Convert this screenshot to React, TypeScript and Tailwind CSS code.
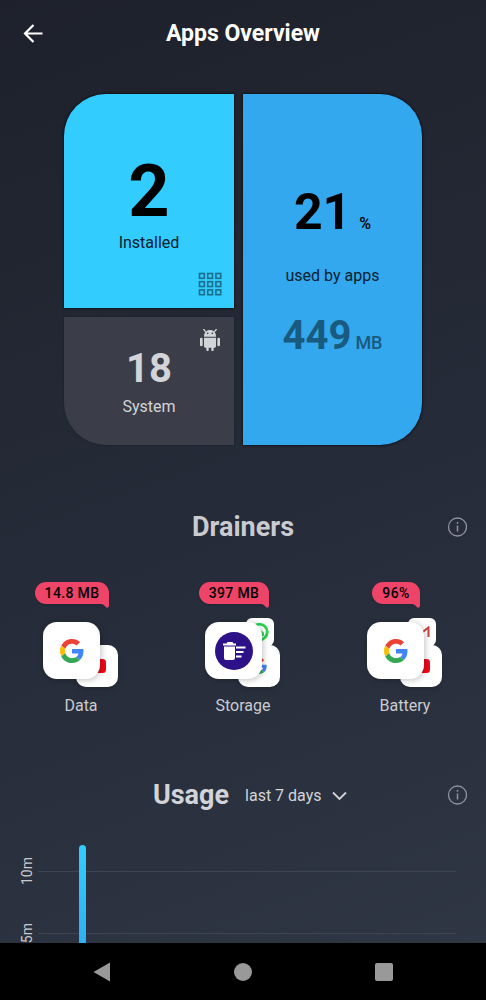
import type { ReactNode } from "react";

const GoogleLogo = ({ className }: { className: string }) => (
  <svg viewBox="0 0 48 48" className={className} aria-hidden="true">
    <path fill="#EA4335" d="M24 9.5c3.54 0 6.71 1.22 9.21 3.6l6.85-6.85C35.9 2.38 30.47 0 24 0 14.62 0 6.51 5.38 2.56 13.22l7.98 6.19C12.43 13.72 17.74 9.5 24 9.5z" />
    <path fill="#4285F4" d="M46.98 24.55c0-1.57-.15-3.09-.38-4.55H24v9.02h12.94c-.58 2.96-2.26 5.48-4.78 7.18l7.73 6c4.51-4.18 7.09-10.36 7.09-17.65z" />
    <path fill="#FBBC05" d="M10.53 28.59c-.48-1.45-.76-2.99-.76-4.59s.27-3.14.76-4.59l-7.98-6.19C.92 16.46 0 20.12 0 24c0 3.88.92 7.54 2.56 10.78l7.97-6.19z" />
    <path fill="#34A853" d="M24 48c6.48 0 11.93-2.13 15.89-5.81l-7.73-6c-2.15 1.45-4.92 2.3-8.16 2.3-6.26 0-11.57-4.22-13.47-9.91l-7.98 6.19C6.51 42.62 14.62 48 24 48z" />
  </svg>
);

const YoutubeLogo = () => (
  <svg viewBox="0 0 20 14" className="w-5" aria-hidden="true">
    <rect width="19" height="14" rx="3.5" fill="#f00617" />
    <path d="M6.5 4.2v5.6L11 7z" fill="#fff" />
  </svg>
);

const WhatsappLogo = () => (
  <svg viewBox="0 0 20 20" className="w-5" aria-hidden="true">
    <circle cx="9.5" cy="10" r="7.8" fill="none" stroke="#2bd34f" strokeWidth="2.8" />
    <path d="M1 19l1.6-5.4 3.8 3.8z" fill="#2bd34f" />
    <path d="M6 5.500h2l3.500 3.200 2.200 1.600.4 3.200-2.600 1.300C8 14.500 6 11 6 5.500z" fill="#2bd34f" />
  </svg>
);

const GmailLogo = () => (
  <svg viewBox="0 0 16 12" className="w-4" aria-hidden="true">
    <path d="M1.500 11V1.500L8 6.500l6.500-5V11" fill="none" stroke="#c9423b" strokeWidth="2" />
  </svg>
);

const CleanerLogo = () => (
  <svg viewBox="0 0 38 38" className="w-[38px]" aria-hidden="true">
    <circle cx="19" cy="19" r="19" fill="#2d1188" />
    <g fill="#fff">
      <path d="M8 11.500h3.500l1-1.500h5l1 1.500H21v2H8z" />
      <path d="M9 14.500h11V26a2 2 0 0 1-2 2h-7a2 2 0 0 1-2-2z" />
      <path d="M21 14.500h9.500v2H21zM21 19h7.500v2H21zM21 23.500h5.500v2H21z" />
    </g>
  </svg>
);

const AndroidIcon = () => (
  <svg viewBox="0 0 60 66" className="w-5" fill="#d3d4d8" aria-hidden="true">
    <path d="M11 1l5 6M49 1l-5 6" stroke="#d3d4d8" strokeWidth="4" strokeLinecap="round" />
    <path d="M12 23C12 10 19 3 30 3s18 7 18 20z" />
    <circle cx="23" cy="13" r="2.500" fill="#3b3e49" />
    <circle cx="37" cy="13" r="2.500" fill="#3b3e49" />
    <rect x="0" y="26" width="8" height="26" rx="4" />
    <rect x="52" y="26" width="8" height="26" rx="4" />
    <path d="M12 26h36v26a4 4 0 0 1-4 4h-3v7a3 3 0 0 1-7 0v-7h-8v7a3 3 0 0 1-7 0v-7h-3a4 4 0 0 1-4-4z" />
  </svg>
);

const AppsGridIcon = () => (
  <svg viewBox="0 0 24 24" className="w-6" fill="none" stroke="#1b6d8c" strokeWidth="1.600" aria-hidden="true">
    {[1.5, 9.7, 17.9].map((y) =>
      [1.5, 9.7, 17.9].map((x) => <rect key={`${x}-${y}`} x={x} y={y} width="4.800" height="4.800" />)
    )}
  </svg>
);

const InfoButton = ({ label }: { label: string }) => (
  <button type="button" aria-label={label} className="justify-self-end">
    <svg viewBox="0 0 20 20" className="w-5" fill="none" stroke="#8f949e" strokeWidth="1.300" aria-hidden="true">
      <circle cx="10.500" cy="10" r="9" />
      <path d="M10.500 8.500v6M10.500 5v1.800" strokeWidth="1.500" />
    </svg>
  </button>
);

interface Drainer {
  label: string;
  value: string;
  main: ReactNode;
  second: ReactNode;
  third?: ReactNode;
}

const drainers: Drainer[] = [
  { label: "Data", value: "14.8 MB", main: <GoogleLogo className="w-6" />, second: <YoutubeLogo /> },
  {
    label: "Storage",
    value: "397 MB",
    main: <CleanerLogo />,
    second: <GoogleLogo className="w-4" />,
    third: <WhatsappLogo />,
  },
  {
    label: "Battery",
    value: "96%",
    main: <GoogleLogo className="w-6" />,
    second: <YoutubeLogo />,
    third: <GmailLogo />,
  },
];

function DrainerCard({ drainer }: { drainer: Drainer }) {
  return (
    <li className="flex flex-col items-center">
      <div className="relative mr-[18px] h-[22px] rounded-full rounded-br-none bg-[#ee4468] px-[10px] text-sm leading-[22px] font-medium tracking-wide text-black shadow-sm">
        {drainer.value}
        <svg viewBox="0 0 8 5" className="absolute top-full right-0 -mt-px w-2" aria-hidden="true">
          <path d="M0 0h8v2.500C8 4.500 6 5.500 4.500 3.800 3.500 2.500 2 1 0 1z" fill="#ee4468" />
        </svg>
      </div>
      {/* stacked app tiles, biggest drainer in front */}
      <div className="relative mt-[14px] h-[69px] w-[76px]">
        {drainer.third && (
          <span className="absolute top-0 right-[7px] flex size-7 items-center justify-center rounded-md bg-white">
            {drainer.third}
          </span>
        )}
        <span className="absolute right-px bottom-0 flex size-[42px] items-center justify-center rounded-[10px] bg-white shadow-md">
          {drainer.second}
        </span>
        <span className="absolute top-1 left-0 flex size-[57px] items-center justify-center rounded-[14px] bg-white shadow-[1px_1px_6px_rgba(0,0,0,0.25)]">
          {drainer.main}
        </span>
      </div>
      <span className="mt-2 text-base leading-[22px] text-[#c9cbd0]">{drainer.label}</span>
    </li>
  );
}

export default function App() {
  return (
    <div className="flex h-screen flex-col overflow-hidden bg-linear-[160deg,#1e212b,#252b38_50%,#303745] font-[Roboto,sans-serif]">
      <header className="grid h-[68px] shrink-0 grid-cols-[1fr_auto_1fr] items-center px-[23px]">
        <button type="button" aria-label="Back" className="w-5">
          <svg viewBox="0 0 20 20" className="w-5" fill="none" stroke="#fff" strokeWidth="2.200" aria-hidden="true">
            <path d="M19.500 9.500H2M10.500 1L2 9.500l8.500 8.500" />
          </svg>
        </button>
        <h1 className="text-[23px] leading-9 font-bold text-white">Apps Overview</h1>
      </header>

      <main className="min-h-0 flex-1 overflow-hidden">
        <section className="mx-16 mt-[26px] grid grid-cols-[170fr_179fr] gap-[9px]">
          <div className="flex flex-col gap-[9px]">
            <div className="relative flex h-[214px] flex-col items-center rounded-tl-[42px] bg-[#33ccff] pt-[60px] text-black shadow-[0_0_3px_#000]">
              <strong className="text-[72px] leading-[76px] font-bold">2</strong>
              <span className="text-base leading-[26px] text-[#08202f]">Installed</span>
              <span className="absolute right-3 bottom-3">
                <AppsGridIcon />
              </span>
            </div>
            <div className="relative flex h-32 flex-col items-center rounded-bl-[42px] bg-[#3b3e49] pt-7 text-[#d3d4d8] shadow-[0_0_2px_#1a1d26]">
              <strong className="text-[40px] leading-[48px] font-bold">18</strong>
              <span className="text-base leading-7">System</span>
              <span className="absolute top-3 right-[14px]">
                <AndroidIcon />
              </span>
            </div>
          </div>
          <div className="flex flex-col items-center rounded-r-[42px] bg-[#33a8ee] pt-[88px] text-black shadow-[0_0_3px_#000]">
            <p className="flex items-baseline gap-2">
              <strong className="text-[50px] leading-[60px] font-bold">21</strong>
              <span className="text-base font-medium">%</span>
            </p>
            <p className="mt-[22px] text-base leading-6 text-[#08202f]">used by apps</p>
            <p className="mt-6 flex items-baseline gap-1 text-[#195a80]">
              <strong className="text-[40px] leading-[48px] font-bold">449</strong>
              <span className="text-lg font-medium">MB</span>
            </p>
          </div>
        </section>

        <section className="mt-16">
          <div className="grid grid-cols-[1fr_auto_1fr] items-center px-[19px]">
            <h2 className="col-start-2 text-[27px] leading-9 font-bold text-[#c9cbd0]">Drainers</h2>
            <InfoButton label="About drainers" />
          </div>
          <ul className="mt-[37px] grid grid-cols-3">
            {drainers.map((drainer) => (
              <DrainerCard key={drainer.label} drainer={drainer} />
            ))}
          </ul>
        </section>

        <section className="mt-[60px]">
          <div className="grid grid-cols-[1fr_auto_1fr] items-center px-[19px]">
            <div className="col-start-2 flex items-center gap-4 pl-[14px]">
              <h2 className="text-[27px] leading-9 font-bold text-[#d3d4d8]">Usage</h2>
              <label className="flex items-center gap-[10px] pt-[2px]">
                <select
                  aria-label="Usage period"
                  className="appearance-none bg-transparent text-base leading-6 text-[#d3d4d8]"
                >
                  <option>last 7 days</option>
                </select>
                <svg viewBox="0 0 15 10" className="w-[15px]" fill="none" stroke="#d3d4d8" strokeWidth="1.800" aria-hidden="true">
                  <path d="M1 1.500l6.500 6.500L14 1.500" />
                </svg>
              </label>
            </div>
            <InfoButton label="About usage" />
          </div>

          <div className="relative mt-[27px]">
            {["10m", "5m"].map((tick) => (
              <div key={tick} className="flex h-[62px] items-center gap-[3px] pr-[30px] pl-[19px] text-sm text-[#c9cbd0]">
                <span className="w-4 rotate-180 leading-4 [writing-mode:vertical-rl]">{tick}</span>
                <span className="h-px flex-1 bg-[#3e4552]" />
              </div>
            ))}
            <div className="absolute top-[5px] bottom-0 left-[79px] w-[7px] rounded-t-full bg-linear-to-b from-[#33ccff] to-[#2eaaf0]" />
          </div>
        </section>
      </main>

      <nav aria-label="System" className="grid h-[57px] shrink-0 grid-cols-3 items-center justify-items-center bg-black px-8">
        <button type="button" aria-label="Back">
          <svg viewBox="0 0 18 20" className="w-[18px]" fill="#999" aria-hidden="true">
            <path d="M17 .5v19L.5 10z" />
          </svg>
        </button>
        <button type="button" aria-label="Home" className="size-[18px] rounded-full bg-[#999]" />
        <button type="button" aria-label="Recents" className="size-[18px] rounded-xs bg-[#999]" />
      </nav>
    </div>
  );
}
